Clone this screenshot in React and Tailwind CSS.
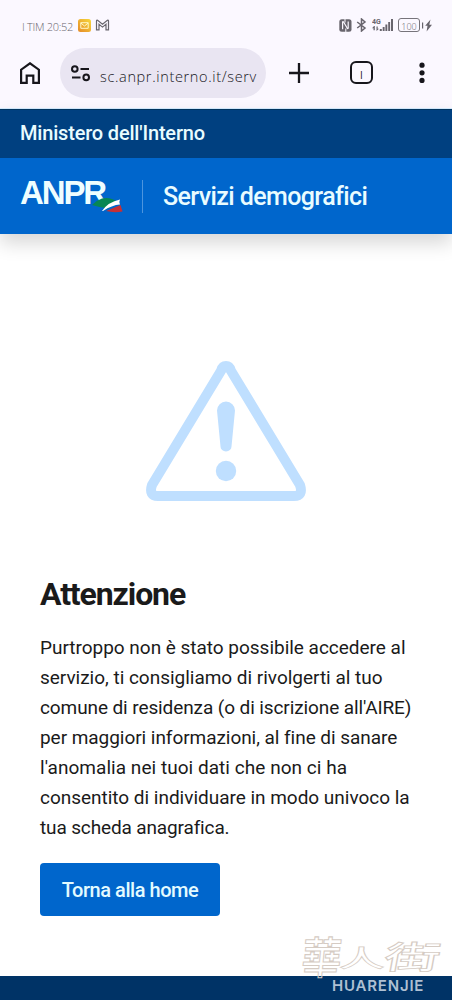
function StatusBar() {
  return (
    <div className="flex h-12 items-start justify-between pl-[22px] pr-5 pt-[17px] text-[#68656d]">
      <div className="flex h-4 items-center">
        <span className="w-[52px] whitespace-nowrap pt-1 font-['Open_Sans',sans-serif] text-[11px] font-light leading-4 tracking-[-0.3px]">I TIM 20:52</span>
        <svg className="ml-1 h-[13px] w-[13px]" viewBox="0 0 13 13">
          <defs>
            <linearGradient id="mail" x1="1" y1="0" x2="0" y2="1">
              <stop offset="0" stopColor="#f7d93c" />
              <stop offset="1" stopColor="#e58a28" />
            </linearGradient>
          </defs>
          <rect width="13" height="13" rx="2.5" fill="url(#mail)" />
          <path d="M2.8 3.7h7.4v5.6H2.8zM2.8 4l3.7 3 3.7-3" fill="none" stroke="#fff8c8" strokeWidth="1" />
        </svg>
        <svg className="ml-1 h-3 w-[15px]" viewBox="0 0 15 12" fill="none" stroke="currentColor" strokeWidth="1.2">
          <path d="M1.5 10.8V2.2Q1.5.8 2.6 1.2L7.5 5.2 12.4 1.2Q13.5.8 13.5 2.2V10.8H11V5.3L7.5 8.1 4 5.3V10.8Z" />
        </svg>
      </div>
      <div className="flex h-4 items-center">
        <svg className="h-[13px] w-[13px]" viewBox="0 0 13 13">
          <rect x=".3" y=".3" width="12.2" height="12.4" rx="2.5" fill="currentColor" />
          <path d="M3.6 10.3V3.3Q3.6 2 4.6 3L8 8.8Q9 10.3 9.2 9V2.6" fill="none" stroke="#fbf8ff" strokeWidth="1.2" />
          <path d="M6 0v3.5M6.8 9.5V13" stroke="#fbf8ff" strokeWidth="1" />
        </svg>
        <svg className="ml-1 h-[14px] w-[11px]" viewBox="0 0 11 14" fill="none" stroke="currentColor" strokeWidth="1.5">
          <path d="M1.2 4 9 10 5.5 13V1L9 4 1.2 10" />
        </svg>
        <svg className="ml-[5px] h-[14px] w-[22px]" viewBox="0 0 22 14" fill="currentColor">
          <text x="0" y="6" fontSize="7" fontWeight="700" fontFamily="Roboto, sans-serif">4G</text>
          <path d="M2 8 0 10.3h1.5v2h1.3v-4.300zM4.500 8.500v4.500L7 10.700H5.700V8.500Z" />
          <path d="M7.8 11h2v2h-2zM10.7 9h1.9v4h-1.9zM13.4 6.5h1.9V13h-1.9zM16.2 4h1.9v9h-1.9zM19 1h2v12h-2z" />
        </svg>
        <div className="ml-1 flex h-[14px] w-[22px] items-center justify-center rounded-[3px] border border-[#77747b] pt-0.5 font-['Open_Sans',sans-serif] text-[9px] font-light leading-none">100</div>
        <svg className="ml-0.5 h-[13px] w-[10px]" viewBox="0 0 10 13" fill="currentColor">
          <path d="M0 3.5h1.2v6H0zM8.5.5 3.2 6.8H5.5L4.6 12.5 10 5.8H7.3z" />
        </svg>
      </div>
    </div>
  )
}

function BrowserBar() {
  return (
    <div className="flex h-[60px] items-start text-[#17161c]">
      <svg className="ml-5 mt-[14px] h-[22px] w-5" viewBox="0 0 20 22" fill="none" stroke="currentColor" strokeWidth="2.2">
        <path d="M1.1 20.9V7.7L10 1.3l8.9 6.4v13.2h-5.6v-7.2H6.7v7.2Z" />
      </svg>
      <div className="ml-5 flex h-[50px] w-[206px] items-center rounded-full bg-[#e9e5f2] pl-[11px]">
        <svg className="h-[17px] w-[19px] shrink-0" viewBox="0 0 19 17" fill="none" stroke="currentColor" strokeWidth="2">
          <circle cx="3.8" cy="4" r="2.8" />
          <circle cx="15.2" cy="12.4" r="2.8" />
          <path d="M9.5 4H18M1 12.4h8.5" />
        </svg>
        <span className="ml-[10px] mt-2 whitespace-nowrap font-['Open_Sans',sans-serif] text-[14.5px] font-light leading-6 tracking-[0.65px]">
          sc.anpr.interno.it/serv
        </span>
      </div>
      <svg className="ml-[23px] mt-[15px] h-5 w-5" viewBox="0 0 20 20" stroke="currentColor" strokeWidth="2.3">
        <path d="M10 0v20M0 10h20" />
      </svg>
      <div className="ml-[41px] mt-[13px] flex h-[23px] w-[23px] items-center justify-center rounded-[6px] border-[2.4px] border-current">
        <span className="mt-1 font-['Open_Sans',sans-serif] text-[10px] leading-none">I</span>
      </div>
      <svg className="ml-[46px] mt-[14px] h-[22px] w-[6px]" viewBox="0 0 6 22" fill="currentColor">
        <circle cx="3" cy="3.2" r="2.6" />
        <circle cx="3" cy="10.8" r="2.6" />
        <circle cx="3" cy="18.4" r="2.6" />
      </svg>
    </div>
  )
}

function Logo() {
  return (
    <div className="relative h-[38px] w-[104px]">
      <span className="block pt-[3px] font-['Liberation_Sans',sans-serif] text-[33px] font-bold leading-[26px] tracking-[-2.1px] text-[#effeff]">ANPR</span>
      <svg className="absolute left-[72px] top-[20px] h-4 w-[32px]" viewBox="0 0 32 16">
        <path d="M0 8Q5 3 10 1.5q8-2 15 3l-9 7Q8 10.5 0 8Z" fill="#078653" />
        <path d="M14 14 28.5 8l2 6.5Q22 16 14 14Z" fill="#c63036" />
        <path d="M10 14Q16 5 28 2.5q-1.5 3 0 5-8 .5-17 6.5Z" fill="#fff" />
      </svg>
    </div>
  )
}

function SiteHeader() {
  return (
    <header className="relative shadow-[0_9px_18px_rgba(0,0,0,0.16)]">
      <div className="h-[49px] border-t border-[#00345f] bg-[#004080] pl-5 pt-[11px] text-[20px] font-medium leading-6 text-[#e9fcff]">
        <span className="inline-block whitespace-nowrap tracking-[-0.18px]">Ministero dell'Interno</span>
      </div>
      <div className="flex h-[76px] items-center bg-[#0066cc] pl-5">
        <Logo />
        <div className="ml-[18px] h-[33px] w-px bg-[#4d95de]" />
        <span className="ml-5 whitespace-nowrap pt-0.5 text-[25px] font-medium leading-8 tracking-[-0.6px] text-[#e9fcff]">Servizi demografici</span>
      </div>
    </header>
  )
}

function WarningIcon() {
  return (
    <svg className="mx-auto h-[140px] w-[160px]" viewBox="0 0 160 140">
      <path d="M75.2 9.5Q76.5 5 80 5T84.8 9.5L154 124Q157.5 135 148 135H12Q2.5 135 6 124Z" fill="none" stroke="#bfdfff" strokeWidth="10" strokeLinejoin="round" />
      <path d="M71 49.5a9 9 0 0 1 18 0l-3.5 36a5.5 5 0 0 1-11 0Z" fill="#bfdfff" />
      <circle cx="80" cy="110" r="10.2" fill="#bfdfff" />
    </svg>
  )
}

function Watermark() {
  return (
    <div className="absolute bottom-1.5 left-[302px] h-[62px] w-[146px]">
      <div className="flex h-[46px] items-center font-['Noto_Sans_CJK_TC',sans-serif] text-[40px] font-medium leading-[46px] text-transparent [-webkit-text-stroke:1px_#d5cbc3]">
        <span className="w-[40px] -skew-x-6 scale-y-[1.1]">華</span>
        <span className="w-[43px] translate-y-0.5 scale-x-[1.15] scale-y-[0.6]">人</span>
        <span className="w-10 origin-left scale-x-[1.4] scale-y-[0.8] -skew-x-6">街</span>
      </div>
      <div className="flex items-center pl-[30px] font-['Inter',sans-serif] text-[15px] font-semibold leading-[15px] tracking-[0.8px] text-[#afc0d2]">HUARENJIE</div>
    </div>
  )
}

export default function App() {
  return (
    <div className="relative flex h-[1000px] w-[452px] flex-col overflow-hidden bg-white font-['Roboto',sans-serif]">
      <div className="h-[109px] border-b border-[#d5ecff] bg-[#fbf8ff]">
        <StatusBar />
        <BrowserBar />
      </div>
      <SiteHeader />
      <main className="flex grow flex-col px-10 pt-[127px] text-[#1a1a1a]">
        <WarningIcon />
        <h1 className="mt-[73px] text-[32px] font-bold leading-10 tracking-[-1.1px]">Attenzione</h1>
        <p className="mt-[19px] whitespace-nowrap text-[19px] leading-[30px] tracking-[-0.02px]">
          <span className="block">Purtroppo non è stato possibile accedere al</span>
          <span className="block">servizio, ti consigliamo di rivolgerti al tuo</span>
          <span className="block tracking-[-0.1px]">comune di residenza (o di iscrizione all'AIRE)</span>
          <span className="block tracking-[-0.05px]">per maggiori informazioni, al fine di sanare</span>
          <span className="block tracking-[0.04px]">l'anomalia nei tuoi dati che non ci ha</span>
          <span className="block">consentito di individuare in modo univoco la</span>
          <span className="block tracking-[-0.14px]">tua scheda anagrafica.</span>
        </p>
        <button className="mt-5 h-[53px] w-[180px] rounded bg-[#0066cc] text-[20px] font-medium tracking-[-0.45px] text-[#e3fbff]">Torna alla home</button>
      </main>
      <footer className="h-6 shrink-0 bg-[#003366]" />
      <Watermark />
    </div>
  )
}
